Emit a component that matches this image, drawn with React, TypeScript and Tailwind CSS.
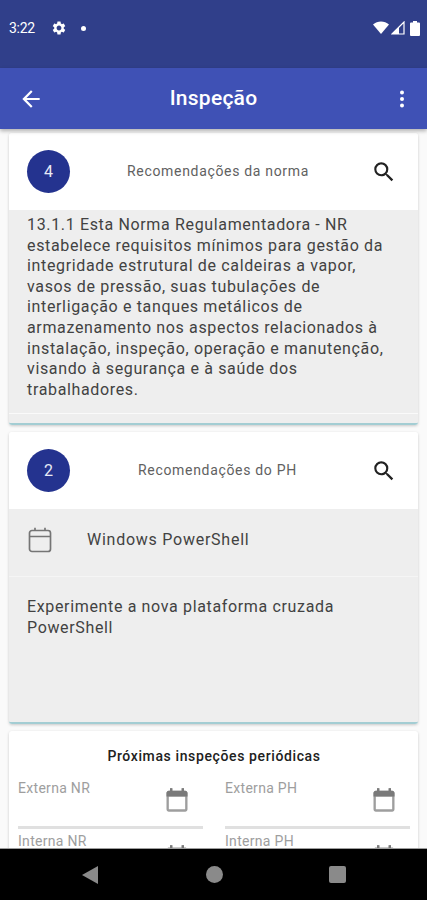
import React from "react";

const F = { fontFamily: "Roboto, sans-serif" };

function Search() {
  return (
    <svg width="26" height="26" viewBox="0 0 24 24" fill="#222">
      <path d="M15.5 14h-.79l-.28-.27A6.47 6.47 0 0 0 16 9.5 6.5 6.5 0 1 0 9.5 16c1.61 0 3.09-.59 4.23-1.57l.27.28v.79l5 4.99L20.49 19l-4.99-5zm-6 0C7.01 14 5 11.99 5 9.5S7.01 5 9.5 5 14 7.01 14 9.5 11.99 14 9.5 14z" />
    </svg>
  );
}

function Cal() {
  return (
    <svg width="28" height="28" viewBox="0 0 24 24" fill="#9e9e9e">
      <path d="M19 4h-1V2h-2v2H8V2H6v2H5c-1.100 0-2 .9-2 2v14c0 1.100.9 2 2 2h14c1.100 0 2-.9 2-2V6c0-1.100-.9-2-2-2zm0 16H5V9h14v11z" />
      <path d="M19 4h-1V2h-2v2H8V2H6v2H5c-1.100 0-2 .9-2 2v3h18V6c0-1.100-.9-2-2-2z" fill="#7a7a7a" />
    </svg>
  );
}

function CalOutline() {
  return (
    <svg width="24" height="26" viewBox="0 0 24 26" fill="none" stroke="#757575" strokeWidth="1.700">
      <rect x="1.500" y="3.500" width="21" height="21" rx="2.500" />
      <path d="M1.500 9.500h21M7 .8v3M17 .8v3" />
    </svg>
  );
}

function CardHeader({ n, title, pl }: { n: string; title: string; pl: string }) {
  return (
    <div className="flex items-center bg-white h-[77px] pl-[18px] pr-[21px] shrink-0">
      <div className="w-[43px] h-[43px] rounded-full bg-[#24338f] text-[#e8eaf6] text-[16px] flex items-center justify-center">{n}</div>
      <div className={`flex-1 text-[14px] tracking-[0.68px] text-[#616161] ${pl}`}>{title}</div>
      <Search />
    </div>
  );
}

function Field({ label }: { label: string }) {
  return (
    <div className="flex-1">
      <div className="h-[48px] relative">
        <div className="text-[14px] tracking-[0.3px] text-[#9e9e9e] leading-[16px] pt-[8px]">{label}</div>
        <div className="absolute right-[12px] top-[14px]"><Cal /></div>
      </div>
      <div className="h-[3px] mt-[6px] bg-[#e0e0e0]" />
      <div className="h-[52px] relative pt-[4px]">
        <div className="text-[14px] tracking-[0.3px] text-[#9e9e9e] leading-[16px]">{label.replace("Externa", "Interna")}</div>
        <div className="absolute right-[12px] top-[14px]"><Cal /></div>
      </div>
    </div>
  );
}

export default function App() {
  return (
    <div className="w-[427px] h-[900px] flex flex-col overflow-hidden bg-[#fafafa]" style={F}>
      <div className="h-[68px] bg-[#303f8a] flex items-start justify-between pt-[18px] pl-[9px] pr-[7px] shrink-0 text-white">
        <div className="flex items-center">
          <span className="text-[14px] leading-[20px] w-[30px] tracking-[-0.3px]">3:22</span>
          <svg className="ml-[12px]" width="16" height="16" viewBox="0 0 24 24" fill="#fff">
            <path d="M19.14 12.94c.04-.3.06-.61.06-.94 0-.32-.02-.64-.07-.94l2.03-1.58a.49.49 0 0 0 .12-.61l-1.92-3.32a.488.488 0 0 0-.59-.22l-2.39.96c-.5-.38-1.03-.7-1.62-.94l-.36-2.54a.484.484 0 0 0-.48-.41h-3.84c-.24 0-.43.17-.47.41l-.36 2.54c-.59.24-1.13.57-1.62.94l-2.39-.96c-.22-.08-.47 0-.59.22L2.74 8.87c-.12.21-.08.47.12.61l2.03 1.58c-.05.3-.09.63-.09.94s.02.64.07.94l-2.03 1.58a.49.49 0 0 0-.12.61l1.92 3.32c.12.22.37.29.59.22l2.39-.96c.5.38 1.03.7 1.62.94l.36 2.54c.05.24.24.41.48.41h3.84c.24 0 .44-.17.47-.41l.36-2.54c.59-.24 1.13-.56 1.62-.94l2.39.96c.22.08.47 0 .59-.22l1.92-3.32c.12-.22.07-.47-.12-.61l-2.01-1.58zM12 15.6c-1.98 0-3.6-1.62-3.6-3.6s1.62-3.6 3.6-3.600 3.6 1.62 3.6 3.6-1.62 3.6-3.6 3.6z" />
          </svg>
          <span className="ml-[14px] w-[5px] h-[5px] rounded-full bg-white" />
        </div>
        <div className="flex items-center gap-[2px] h-[20px]">
          <svg width="16" height="14" viewBox="0 0 16 14" fill="#fff"><path d="M0 3.500C4.500-.5 11.500-.5 16 3.500L8 13z" /></svg>
          <svg width="14" height="14" viewBox="0 0 14 14"><path d="M1 13 13 1v12z" fill="none" stroke="#fff" strokeWidth="1.200" /><path d="M1 13 8 6v7z" fill="#fff" /></svg>
          <svg className="ml-[3px]" width="10" height="15" viewBox="0 0 10 15" fill="#fff"><path d="M3 0h4v1.500h2a1 1 0 0 1 1 1V14a1 1 0 0 1-1 1H1a1 1 0 0 1-1-1V2.500a1 1 0 0 1 1-1h2z" /></svg>
        </div>
      </div>

      <div className="h-[61px] bg-[#3f51b5] flex items-center justify-between pl-[18px] pr-[13px] shrink-0 relative z-10 shadow-[0_2px_4px_rgba(0,0,0,0.3)] text-white">
        <svg width="26" height="26" viewBox="0 0 24 24" fill="#fff"><path d="M20 11H7.830l5.590-5.590L12 4l-8 8 8 8 1.410-1.410L7.830 13H20v-2z" /></svg>
        <div className="text-[21px] tracking-[0.25px] font-medium mr-[7px]">Inspeção</div>
        <svg width="24" height="24" viewBox="0 0 24 24" fill="#fff"><circle cx="12" cy="5.500" r="2" /><circle cx="12" cy="12" r="2" /><circle cx="12" cy="18.500" r="2" /></svg>
      </div>

      <div className="flex-1 min-h-0 overflow-hidden px-[9px] pt-[4px] flex flex-col gap-[7px]">
        <section className="h-[292px] shrink-0 flex flex-col rounded-[3px] overflow-hidden border-b-2 border-[#a3cdd3] shadow-[0_1px_3px_rgba(0,0,0,0.2)]">
          <CardHeader n="4" title="Recomendações da norma" pl="pl-[57px]" />
          <div className="flex-1 bg-[#eeeeee] flex flex-col">
            <p className="flex-1 pl-[18px] pr-[24px] pt-[5px] text-[16px] tracking-[0.65px] leading-[20.6px] text-[#424242]">
              13.1.1 Esta Norma Regulamentadora - NR estabelece requisitos mínimos para gestão da integridade estrutural de caldeiras a vapor, vasos de pressão, suas tubulações de interligação e tanques metálicos de armazenamento nos aspectos relacionados à instalação, inspeção, operação e manutenção, visando à segurança e à saúde dos trabalhadores.
            </p>
            <div className="h-px bg-[#fafafa] mb-[9px]" />
          </div>
        </section>

        <section className="h-[292px] shrink-0 flex flex-col rounded-[3px] overflow-hidden border-b-2 border-[#a3cdd3] shadow-[0_1px_3px_rgba(0,0,0,0.2)]">
          <CardHeader n="2" title="Recomendações do PH" pl="pl-[68px]" />
          <div className="flex-1 bg-[#eeeeee] flex flex-col">
            <div className="h-[68px] flex items-center pl-[19px] pb-[6px] border-b border-[#f5f5f5]">
              <CalOutline />
              <span className="ml-[35px] text-[16px] tracking-[0.75px] text-[#424242]">Windows PowerShell</span>
            </div>
            <p className="pl-[18px] pr-[40px] pt-[20px] text-[16px] tracking-[0.65px] leading-[20.6px] text-[#424242]">
              Experimente a nova plataforma cruzada PowerShell
            </p>
          </div>
        </section>

        <section className="shrink-0 bg-white rounded-[3px] shadow-[0_1px_3px_rgba(0,0,0,0.2)] pl-[9px] pr-[8px] pt-[16px]">
          <h2 className="text-center text-[14px] tracking-[0.62px] font-medium text-[#212121] leading-[18px] mb-[7px]">Próximas inspeções periódicas</h2>
          <div className="flex gap-[22px]">
            <Field label="Externa NR" />
            <Field label="Externa PH" />
          </div>
        </section>
      </div>

      <div className="h-[52px] bg-black flex items-center justify-between pl-[81px] pr-[81px] shrink-0 relative z-10 border-t border-[#9e9e9e]">
        <svg width="18" height="20" viewBox="0 0 18 20" fill="#8a8a8a"><path d="M17 1v18L1 10z" /></svg>
        <div className="w-[17px] h-[17px] rounded-full bg-[#8a8a8a]" />
        <div className="w-[17px] h-[17px] rounded-[2px] bg-[#8a8a8a]" />
      </div>
    </div>
  );
}
